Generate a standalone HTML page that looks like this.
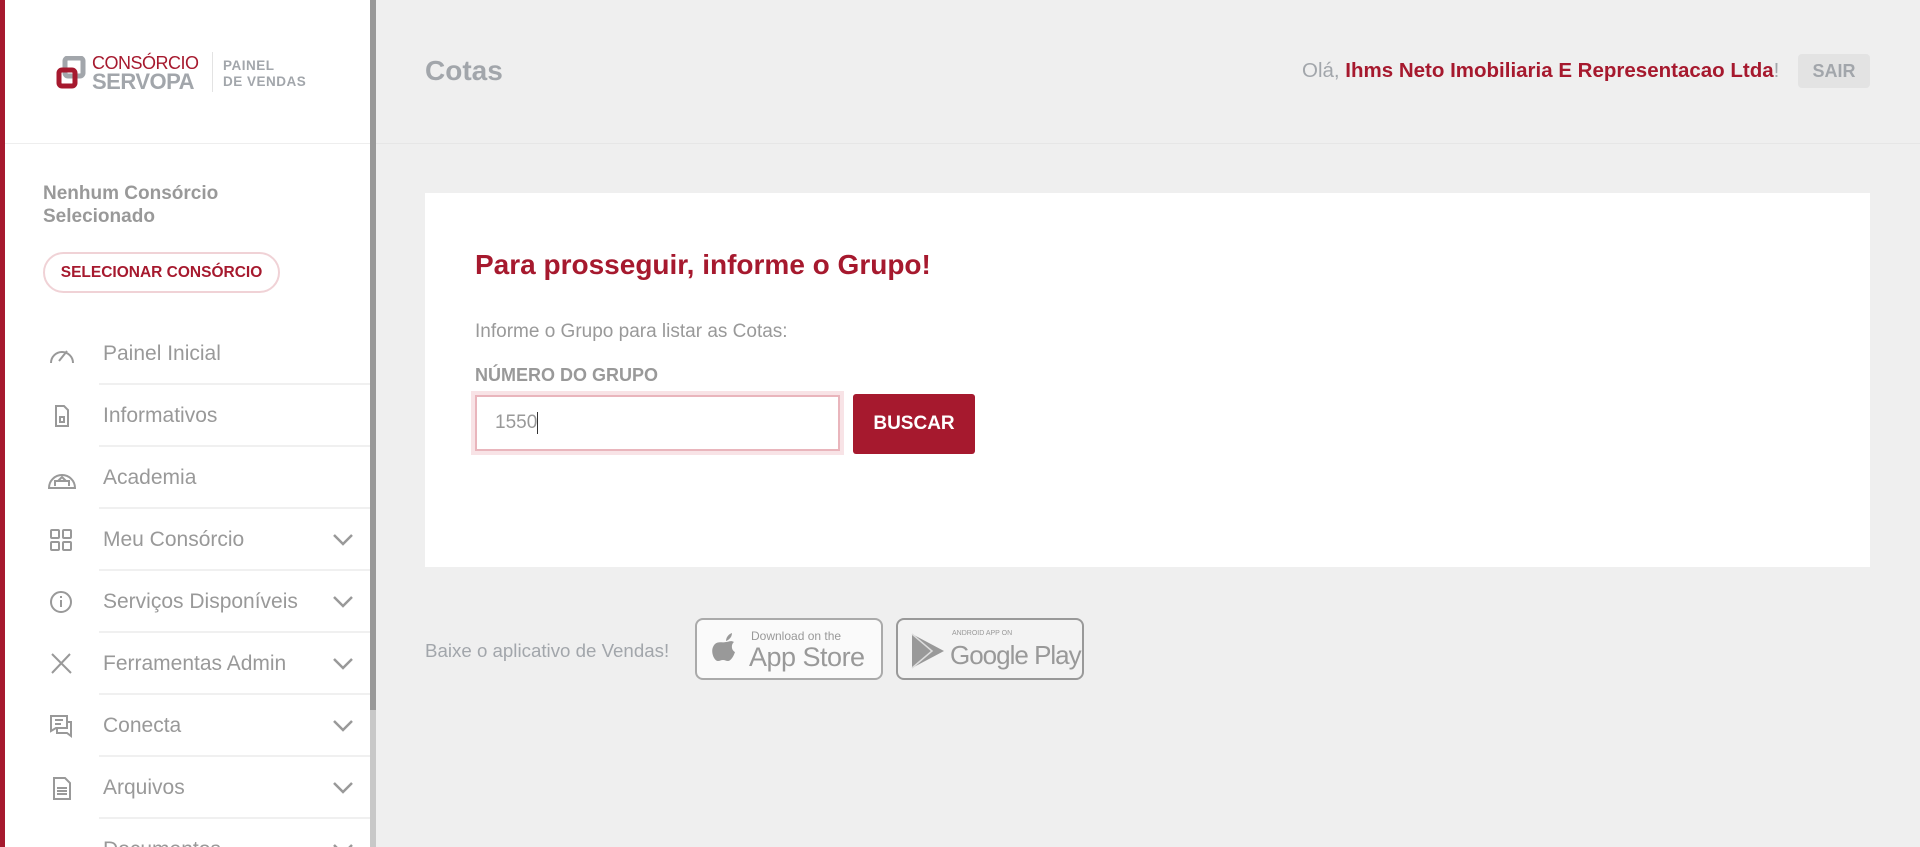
<!DOCTYPE html>
<html style="width:1920px;height:847px;overflow:hidden"><head><meta charset="utf-8"><style>
*{box-sizing:border-box;margin:0;padding:0}
body{width:1920px;height:847px;overflow:hidden;background:#efefef;font-family:"Liberation Sans",sans-serif;position:relative}
.redbar{position:absolute;left:0;top:0;width:5px;height:847px;background:#a6192e}
.side{position:absolute;left:5px;top:0;width:365px;height:847px;background:#fff;overflow:hidden}
.scroll{position:absolute;left:370px;top:0;width:6px;height:847px;background:#c8c8c8}
.thumb{position:absolute;left:370px;top:0;width:6px;height:710px;background:#999}
.sep{position:absolute;left:0;top:143px;width:1920px;height:1px;background:#e6e6e6}
.abs{position:absolute}
.item{position:absolute;left:0;width:365px;height:62px}
.item .t{position:absolute;left:98px;top:50%;transform:translateY(-50%);font-size:21px;color:#999;white-space:nowrap}
.item .line{position:absolute;left:94px;right:0;bottom:0;height:2px;background:#f0f0f0}
.item svg.ic{position:absolute;left:42px;top:50%;transform:translateY(-50%)}
.item svg.ch{position:absolute;left:327px;top:50%;transform:translateY(-50%)}
</style></head><body>
<div class="side">
 <svg class="abs" style="left:51px;top:56px" width="30" height="34" viewBox="0 0 30 34">
  <rect x="9" y="2" width="18" height="18" rx="3" fill="none" stroke="#a2a6ab" stroke-width="5"/>
  <rect x="3" y="14" width="16" height="16" rx="3" fill="none" stroke="#a6192e" stroke-width="5"/>
 </svg>
 <div class="abs" style="left:87px;top:53px;font-size:18px;color:#a6192e;letter-spacing:-0.5px">CONSÓRCIO</div>
 <div class="abs" style="left:87px;top:69px;font-size:22px;font-weight:bold;color:#a2a6ab;letter-spacing:-0.5px">SERVOPA</div>
 <div class="abs" style="left:207px;top:52px;width:1px;height:40px;background:#e3e3e3"></div>
 <div class="abs" style="left:218px;top:58px;font-size:13.5px;font-weight:bold;color:#a2a6ab;line-height:16px;letter-spacing:0.5px">PAINEL<br>DE VENDAS</div>

 <div class="abs" style="left:38px;top:182px;font-size:19px;font-weight:bold;color:#999;line-height:23px">Nenhum Consórcio<br>Selecionado</div>
 <div class="abs" style="left:38px;top:252px;width:237px;height:41px;border:2px solid #f0d2d6;border-radius:21px;font-size:15.5px;font-weight:bold;color:#a6192e;text-align:center;line-height:37px;white-space:nowrap">SELECIONAR CONSÓRCIO</div>

 <div class="item" style="top:323px"><svg class="ic" width="30" height="24" viewBox="0 0 30 24" fill="none" stroke="#999" stroke-width="2"><path d="M4 21 A11 11 0 1 1 26 21"/><path d="M12 19 L20 9"/></svg><span class="t">Painel Inicial</span><div class="line"></div></div>
 <div class="item" style="top:385px"><svg class="ic" width="30" height="24" viewBox="0 0 30 24" fill="none" stroke="#999" stroke-width="2"><path d="M9 2h8l4 4v16H9z"/><rect x="13" y="13" width="4" height="5"/></svg><span class="t">Informativos</span><div class="line"></div></div>
 <div class="item" style="top:447px"><svg class="ic" width="30" height="24" viewBox="0 0 30 24" fill="none" stroke="#999" stroke-width="2"><path d="M2 22 A13 13 0 0 1 28 22z"/><path d="M8 20v-5h14v5M11 15l4-4 4 4"/></svg><span class="t">Academia</span><div class="line"></div></div>
 <div class="item" style="top:509px"><svg class="ic" width="30" height="24" viewBox="0 0 30 24" fill="none" stroke="#999" stroke-width="2"><rect x="4" y="2" width="8" height="8" rx="1"/><rect x="16" y="2" width="8" height="8" rx="1"/><rect x="4" y="14" width="8" height="8" rx="1"/><rect x="16" y="14" width="8" height="8" rx="1"/></svg><span class="t">Meu Consórcio</span><svg class="ch" width="22" height="14" viewBox="0 0 22 14" fill="none" stroke="#999" stroke-width="2.5"><path d="M2 2l9 9 9-9"/></svg><div class="line"></div></div>
 <div class="item" style="top:571px"><svg class="ic" width="30" height="24" viewBox="0 0 30 24" fill="none" stroke="#999" stroke-width="2"><circle cx="14" cy="12" r="10"/><path d="M14 10v7M14 6v2"/></svg><span class="t">Serviços Disponíveis</span><svg class="ch" width="22" height="14" viewBox="0 0 22 14" fill="none" stroke="#999" stroke-width="2.5"><path d="M2 2l9 9 9-9"/></svg><div class="line"></div></div>
 <div class="item" style="top:633px"><svg class="ic" width="30" height="24" viewBox="0 0 30 24" fill="none" stroke="#999" stroke-width="2"><path d="M5 2l19 19M23 2L5 21"/></svg><span class="t">Ferramentas Admin</span><svg class="ch" width="22" height="14" viewBox="0 0 22 14" fill="none" stroke="#999" stroke-width="2.5"><path d="M2 2l9 9 9-9"/></svg><div class="line"></div></div>
 <div class="item" style="top:695px"><svg class="ic" width="30" height="24" viewBox="0 0 30 24" fill="none" stroke="#999" stroke-width="2"><path d="M4 2h16v12H9l-5 3z"/><path d="M8 6h8M8 10h6M20 8h4v14l-4-3H10v-4"/></svg><span class="t">Conecta</span><svg class="ch" width="22" height="14" viewBox="0 0 22 14" fill="none" stroke="#999" stroke-width="2.5"><path d="M2 2l9 9 9-9"/></svg><div class="line"></div></div>
 <div class="item" style="top:757px"><svg class="ic" width="30" height="24" viewBox="0 0 30 24" fill="none" stroke="#999" stroke-width="2"><path d="M7 2h11l5 5v16H7z"/><path d="M10 12h10M10 15h10M10 18h10"/></svg><span class="t">Arquivos</span><svg class="ch" width="22" height="14" viewBox="0 0 22 14" fill="none" stroke="#999" stroke-width="2.5"><path d="M2 2l9 9 9-9"/></svg><div class="line"></div></div>
 <div class="item" style="top:819px"><span class="t">Documentos</span><svg class="ch" width="22" height="14" viewBox="0 0 22 14" fill="none" stroke="#999" stroke-width="2.5"><path d="M2 2l9 9 9-9"/></svg></div>
</div>
<div class="redbar"></div>
<div class="scroll"></div><div class="thumb"></div>
<div class="sep" style="left:376px;width:1544px"></div>
<div class="sep" style="left:5px;width:365px;background:#eee"></div>

<div class="abs" style="left:425px;top:55px;font-size:28px;font-weight:bold;color:#a2a6ab">Cotas</div>
<div class="abs" style="left:1302px;top:59px;font-size:20.5px;color:#a2a6ab;white-space:nowrap">Olá, <b style="color:#a6192e">Ihms Neto Imobiliaria E Representacao Ltda</b>!</div>
<div class="abs" style="left:1798px;top:54px;width:72px;height:34px;background:#e3e3e3;border-radius:4px;font-size:18px;font-weight:bold;color:#a2a6ab;text-align:center;line-height:34px">SAIR</div>

<div class="abs" style="left:425px;top:193px;width:1445px;height:374px;background:#fff">
 <div class="abs" style="left:50px;top:56px;font-size:28px;font-weight:bold;color:#a6192e;white-space:nowrap">Para prosseguir, informe o Grupo!</div>
 <div class="abs" style="left:50px;top:128px;font-size:19px;color:#999;white-space:nowrap">Informe o Grupo para listar as Cotas:</div>
 <div class="abs" style="left:50px;top:172px;font-size:18px;font-weight:bold;color:#999;white-space:nowrap">NÚMERO DO GRUPO</div>
 <div class="abs" style="left:46px;top:198px;width:373px;height:64px;background:#f8e3e6"></div>
 <div class="abs" style="left:50px;top:202px;width:365px;height:56px;background:#fff;border:2px solid #e9b5bc;font-size:19px;color:#999;padding-left:18px;line-height:52px">1550<span style="display:inline-block;width:1px;height:22px;background:#333;vertical-align:middle"></span></div>
 <div class="abs" style="left:428px;top:201px;width:122px;height:60px;background:#a6192e;border-radius:3px;color:#fff;font-size:19px;font-weight:bold;text-align:center;line-height:60px">BUSCAR</div>
</div>

<div class="abs" style="left:425px;top:640px;font-size:18.7px;color:#a2a6ab;white-space:nowrap">Baixe o aplicativo de Vendas!</div>
<div class="abs" style="left:695px;top:618px;width:188px;height:62px;border:2px solid #aaa;border-radius:8px;background:#fafafa">
 <svg class="abs" style="left:14px;top:12px" width="30" height="36" viewBox="0 0 30 36"><path d="M15 10c2-0 5-2 8 0-3 2-3 8 1 10-2 6-5 9-7 9s-3-1-5-1-3 1-5 1C3 29-2 18 4 12c3-3 7-1 11-2z" fill="#999"/><path d="M15 9c0-4 3-7 6-8 0 4-3 7-6 8z" fill="#999"/></svg>
 <div class="abs" style="left:54px;top:9px;font-size:12px;color:#999">Download on the</div>
 <div class="abs" style="left:52px;top:22px;font-size:27px;color:#999;letter-spacing:-0.5px">App Store</div>
</div>
<div class="abs" style="left:896px;top:618px;width:188px;height:62px;border:2px solid #999;border-radius:8px;background:#f3f3f3">
 <svg class="abs" style="left:12px;top:12px" width="36" height="38" viewBox="0 0 36 38"><path d="M2 2l32 17L2 36z" fill="#999"/><path d="M2 2l20 17L2 36" fill="none" stroke="#ddd" stroke-width="1.5"/></svg>
 <div class="abs" style="left:54px;top:10px;font-size:7px;color:#999">ANDROID APP ON</div>
 <div class="abs" style="left:52px;top:20px;font-size:26px;color:#999;letter-spacing:-1px">Google Play</div>
</div>
</body></html>
